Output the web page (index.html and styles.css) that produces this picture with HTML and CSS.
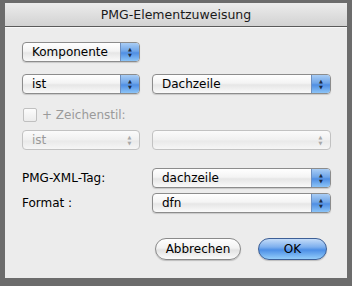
FILE: index.html
```html
<!DOCTYPE html>
<html lang="de">
<head>
    <meta charset="UTF-8">
    <title>PMG-Elementzuweisung</title>
    <link rel="stylesheet" href="styles.css">
</head>
<body>
    <div class="window">
        <div class="titlebar">PMG-Elementzuweisung</div>
        <div class="content">
            <!-- Komponente -->
            <div class="row first">
                <div class="popup small"><span class="value">Komponente</span><span class="arrows">&#9650;<br>&#9660;</span></div>
            </div>

            <div class="row second">
                <div class="popup left"><span class="value">ist</span><span class="arrows">&#9650;<br>&#9660;</span></div>
                <div class="popup right"><span class="value">Dachzeile</span><span class="arrows">&#9650;<br>&#9660;</span></div>
            </div>

            <!-- Zeichenstil (disabled) -->
            <div class="check-row">
                <span class="checkbox"></span>
                <span class="check-label">+ Zeichenstil:</span>
            </div>
            <div class="row disabled">
                <div class="popup left"><span class="value">ist</span><span class="arrows">&#9650;<br>&#9660;</span></div>
                <div class="popup right"><span class="value"></span><span class="arrows">&#9650;<br>&#9660;</span></div>
            </div>

            <div class="row tag">
                <label class="field-label">PMG-XML-Tag:</label>
                <div class="popup right"><span class="value">dachzeile</span><span class="arrows">&#9650;<br>&#9660;</span></div>
            </div>
            <div class="row format">
                <label class="field-label">Format :</label>
                <div class="popup right"><span class="value">dfn</span><span class="arrows">&#9650;<br>&#9660;</span></div>
            </div>

            <div class="buttons">
                <button class="btn">Abbrechen</button>
                <button class="btn default">OK</button>
            </div>
        </div>
    </div>
</body>
</html>
```

FILE: styles.css
```css
html, body { margin: 0; height: 100%; }
body { background: #6c6c6c; font-family: "DejaVu Sans", "Lucida Grande", sans-serif; font-size: 12px; color: #000; }
.window { margin: 3px 5px 0 5px; height: 275px; background: #ececec; display: flex; flex-direction: column; }
.titlebar { height: 23px; line-height: 23px; text-align: center; font-size: 12.5px; color: #1a1a1a; background: linear-gradient(#ececec, #d2d2d2); border-bottom: 1px solid #5a5a5a; }
.content { padding: 14px 0 0 17px; flex: 1; border-top: 1px solid #f8f8f8; }
.row { display: flex; align-items: center; gap: 12px; height: 20px; }
.row.second { margin-top: 12px; }
.row.disabled { margin-top: 7px; }
.row.tag { margin-top: 18px; }
.row.format { margin-top: 5px; }

.popup { box-sizing: border-box; height: 20px; display: flex; border: 1px solid #8c8c8c; border-radius: 4px; background: linear-gradient(#ffffff, #f4f4f4 45%, #e6e6e6 55%, #fafafa); box-shadow: 0 1px 1px rgba(0,0,0,0.15); overflow: hidden; }
.popup.small, .popup.left { width: 118px; }
.popup.right { width: 179px; }
.popup .value { flex: 1; padding-left: 9px; line-height: 18px; white-space: nowrap; }
.popup .arrows { width: 19px; font-size: 5px; line-height: 6px; text-align: center; padding-top: 3px; box-sizing: border-box; color: #1c2a40; border-left: 1px solid #6d8fc0; background: linear-gradient(#a9cdf5, #6fa5e8 45%, #4f8ee3 55%, #8cc4f7); }

.disabled .popup { border-color: #c2c2c2; box-shadow: none; background: linear-gradient(#fbfbfb, #f0f0f0 50%, #e9e9e9 55%, #f6f6f6); }
.disabled .popup .value { color: #9a9a9a; }
.disabled .popup .arrows { background: none; border-left: none; color: #a8a8a8; }

.check-row { display: flex; align-items: center; height: 16px; margin-top: 13px; }
.checkbox { box-sizing: border-box; width: 14px; height: 14px; border: 1px solid #c0c0c0; border-radius: 2px; background: linear-gradient(#fcfcfc, #ececec); margin: 0 5px 0 1px; }
.check-label { color: #9a9a9a; }

.field-label { width: 118px; }

.buttons { display: flex; gap: 17px; margin: 25px 0 0 133px; }
.btn { box-sizing: border-box; height: 22px; padding: 0; font-family: inherit; font-size: 12px; border-radius: 11px; border: 1px solid #8a8a8a; background: linear-gradient(#ffffff, #f2f2f2 45%, #e2e2e2 55%, #fbfbfb); box-shadow: 0 1px 1px rgba(0,0,0,0.2); width: 86px; }
.btn.default { width: 69px; border-color: #3d5f96; background: linear-gradient(#c4dcf8, #7eb0ee 40%, #4d8fe6 55%, #93cdfa); }
```
